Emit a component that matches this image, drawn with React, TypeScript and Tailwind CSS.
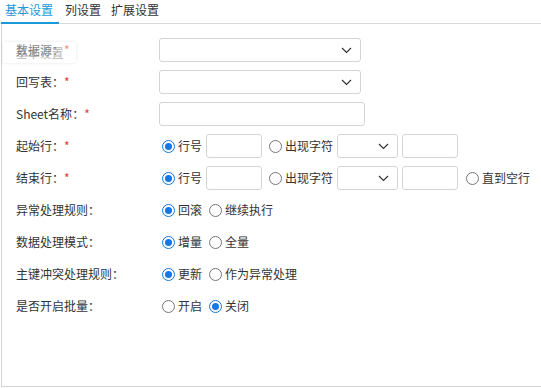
import React from 'react';

const Radio: React.FC<{ checked?: boolean }> = ({ checked }) => (
  <span
    className={`inline-flex h-[13px] w-[13px] shrink-0 items-center justify-center rounded-full border ${
      checked ? 'border-[#1677e5]' : 'border-[#767676]'
    } bg-white`}
  >
    {checked && <span className="h-[7px] w-[7px] rounded-full bg-[#1677e5]" />}
  </span>
);

const Option: React.FC<{ checked?: boolean; label: string; className?: string }> = ({ checked, label, className }) => (
  <span className={`flex items-center gap-[3px] ${className || ''}`}>
    <Radio checked={checked} />
    <span>{label}</span>
  </span>
);

const Select: React.FC<{ className: string }> = ({ className }) => (
  <div className={`flex h-[24px] items-center justify-end rounded-[3px] border border-[#d4d4d4] bg-white pr-[8px] ${className}`}>
    <svg width="11" height="7" viewBox="0 0 11 7" fill="none">
      <path d="M1 1l4.5 4.5L10 1" stroke="#333" strokeWidth="1.2" />
    </svg>
  </div>
);

const Input: React.FC<{ className: string }> = ({ className }) => (
  <div className={`h-[24px] rounded-[3px] border border-[#d4d4d4] bg-white ${className}`} />
);

const Row: React.FC<{ label: string; required?: boolean; children: React.ReactNode }> = ({ label, required, children }) => (
  <div className="flex h-[32px] items-center">
    <div className="w-[143px] shrink-0">
      {label}：{required && <span className="text-[#e4393c]">*</span>}
    </div>
    <div className="flex items-center">{children}</div>
  </div>
);

export default function App() {
  const tabs = ['基本设置', '列设置', '扩展设置'];
  return (
    <div
      className="relative h-[388px] w-[541px] overflow-hidden bg-white text-[12px] text-[#333]"
      style={{ fontFamily: '"Microsoft YaHei", "Noto Sans CJK SC", sans-serif' }}
    >
      {/* tabs */}
      <div className="flex h-[24px] items-end border-b border-[#d9d9d9] pl-[1px]">
        {tabs.map((t, i) => (
          <div
            key={t}
            className={`flex h-[24px] items-center pb-[2px] ${
              i === 0 ? 'border-b-2 border-[#1a9ad6] text-[#1a9ad6] mb-[-1px] w-[58px] pl-[4px]' : 'ml-[2px] px-[4px]'
            }`}
          >
            {t}
          </div>
        ))}
      </div>

      {/* form panel */}
      <div className="ml-[1px] h-[363px] border-b border-l border-[#d4d4d4] pl-[14px] pt-[10px]">
        <Row label="数据源" required>
          <Select className="w-[202px]" />
        </Row>
        <Row label="回写表" required>
          <Select className="w-[202px]" />
        </Row>
        <Row label="Sheet名称" required>
          <Input className="w-[206px]" />
        </Row>
        <Row label="起始行" required>
          <Option checked label="行号" className="ml-[3px]" />
          <Input className="ml-[4px] w-[56px]" />
          <Option label="出现字符" className="ml-[7px]" />
          <Select className="ml-[4px] w-[61px]" />
          <Input className="ml-[4px] w-[56px]" />
        </Row>
        <Row label="结束行" required>
          <Option checked label="行号" className="ml-[3px]" />
          <Input className="ml-[4px] w-[56px]" />
          <Option label="出现字符" className="ml-[7px]" />
          <Select className="ml-[4px] w-[61px]" />
          <Input className="ml-[4px] w-[56px]" />
          <Option label="直到空行" className="ml-[8px]" />
        </Row>
        <Row label="异常处理规则">
          <Option checked label="回滚" className="ml-[3px]" />
          <Option label="继续执行" className="ml-[7px]" />
        </Row>
        <Row label="数据处理模式">
          <Option checked label="增量" className="ml-[3px]" />
          <Option label="全量" className="ml-[7px]" />
        </Row>
        <Row label="主键冲突处理规则">
          <Option checked label="更新" className="ml-[3px]" />
          <Option label="作为异常处理" className="ml-[7px]" />
        </Row>
        <Row label="是否开启批量">
          <Option label="开启" className="ml-[3px]" />
          <Option checked label="关闭" className="ml-[7px]" />
        </Row>
      </div>

      {/* drag ghost of the tab, as in the reference */}
      <div className="absolute left-[3px] top-[42px] flex h-[21px] w-[73px] items-end justify-center rounded-[2px] bg-white/60 pb-[1px] text-[#999] opacity-70 shadow-[0_0_3px_rgba(0,0,0,0.15)]">
        基本设置
      </div>
    </div>
  );
}
